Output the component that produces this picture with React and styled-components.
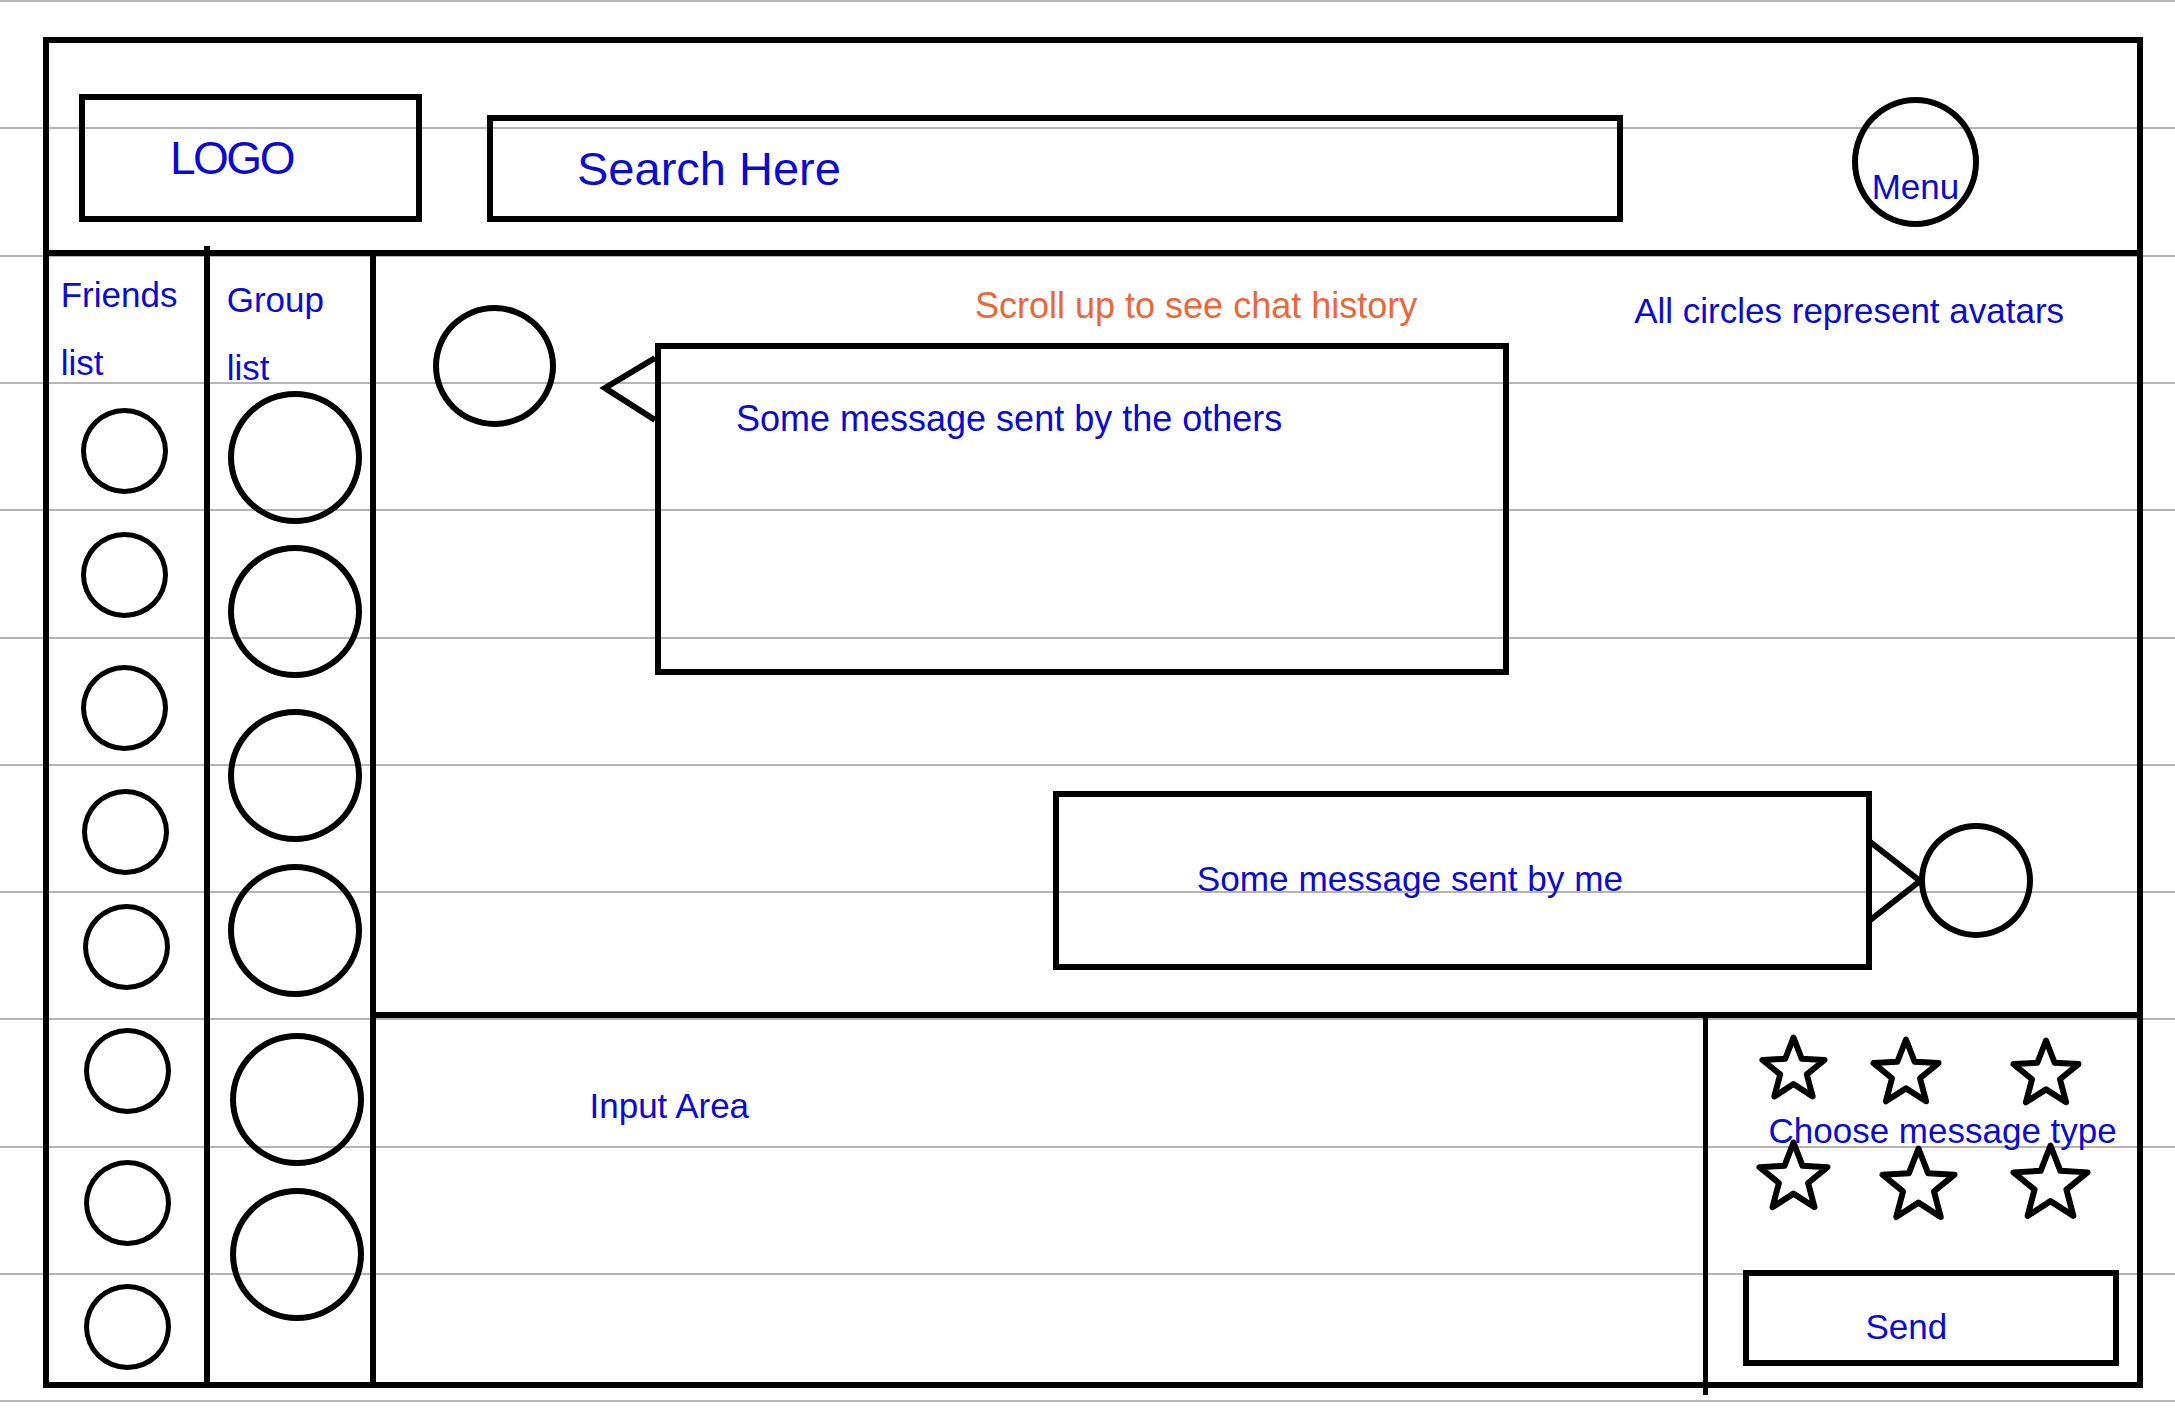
import React from "react";
import styled, { createGlobalStyle } from "styled-components";

const BLUE = "#0b0bcf";
const ORANGE = "#e8683c";
const LINE = 6;

const GlobalStyle = createGlobalStyle`
  html, body {
    margin: 0;
    padding: 0;
  }
  html {
    min-height: 1414px;
    background-color: #fff;
    background-image: repeating-linear-gradient(
      to bottom,
      #b4b4b4 0,
      #b4b4b4 2px,
      transparent 2px,
      transparent 127.3px
    );
  }
  body {
    min-height: 1414px;
    font-family: "Liberation Sans", Arial, sans-serif;
  }
`;

const Page = styled.div`
  padding: 37px 0 0 43px;
`;

const Frame = styled.div`
  box-sizing: border-box;
  width: 2100px;
  height: 1351px;
  border: ${LINE}px solid #000;
  display: flex;
  flex-direction: column;
`;

// Header
const Header = styled.header`
  box-sizing: border-box;
  height: 213px;
  border-bottom: ${LINE}px solid #000;
  display: flex;
  align-items: flex-end;
  padding: 0 0 28px 30px;
  flex-shrink: 0;
`;

const LogoBox = styled.div`
  box-sizing: border-box;
  width: 343px;
  height: 128px;
  border: ${LINE}px solid #000;
  display: flex;
  align-items: center;
  padding-left: 85px;
  color: ${BLUE};
  font-size: 46px;
  letter-spacing: -2.5px;
  line-height: 1;
`;

const SearchBox = styled.div`
  box-sizing: border-box;
  margin-left: 65px;
  width: 1136px;
  height: 107px;
  border: ${LINE}px solid #000;
  display: flex;
  align-items: center;
  padding-left: 84px;
  color: ${BLUE};
  font-size: 47px;
  line-height: 1;
`;

const MenuButton = styled.div`
  box-sizing: border-box;
  margin: 0 0 -4.5px 229px;
  width: 127px;
  height: 130px;
  border: ${LINE}px solid #000;
  border-radius: 50%;
  display: flex;
  justify-content: center;
  padding-top: 66px;
  color: ${BLUE};
  font-size: 35px;
  line-height: 1;
`;

// Body
const Body = styled.div`
  flex: 1;
  display: flex;
  min-height: 0;
`;

const SideColumn = styled.aside`
  box-sizing: border-box;
  width: ${(p) => p.$width}px;
  border-right: ${LINE}px solid #000;
  display: flex;
  flex-direction: column;
  position: relative;
  flex-shrink: 0;

  /* pen stroke that pokes above the header line */
  &::before {
    content: "";
    display: ${(p) => (p.$tick ? "block" : "none")};
    position: absolute;
    top: -10px;
    right: -${LINE}px;
    width: ${LINE}px;
    height: 10px;
    background: #000;
  }
`;

const ListLabel = styled.div`
  color: ${BLUE};
  font-size: 35px;
  line-height: 68px;
  padding: ${(p) => p.$top}px 0 0 ${(p) => p.$left}px;
`;

const AvatarStack = styled.div`
  display: flex;
  flex-direction: column;
  align-items: center;
  margin-top: ${(p) => p.$top}px;
  padding-left: ${(p) => p.$shift || 0}px;
`;

const Avatar = styled.div`
  box-sizing: border-box;
  width: ${(p) => p.$w}px;
  height: ${(p) => p.$h}px;
  border: ${(p) => p.$bw || LINE}px solid #000;
  border-radius: 50%;
  flex-shrink: 0;
  margin-top: ${(p) => p.$mt || 0}px;
  margin-left: ${(p) => p.$ml || 0}px;
`;

// Chat
const Main = styled.main`
  flex: 1;
  display: flex;
  flex-direction: column;
  min-width: 0;
`;

const ChatArea = styled.section`
  flex: 1;
  display: flex;
  flex-direction: column;
  min-height: 0;
`;

const NoticeRow = styled.div`
  display: flex;
  align-items: flex-start;
  padding-top: 32px;
  line-height: 1;
  white-space: nowrap;
`;

const ScrollHint = styled.span`
  margin-left: 599px;
  color: ${ORANGE};
  font-size: 36px;
`;

const AvatarNote = styled.span`
  margin: 4.7px 0 0 217px;
  color: ${BLUE};
  font-size: 35px;
`;

const MessageRow = styled.div`
  display: flex;
  align-items: ${(p) => (p.$mine ? "center" : "flex-start")};
  justify-content: ${(p) => (p.$mine ? "flex-end" : "flex-start")};
  margin-top: ${(p) => p.$top}px;
  padding: ${(p) => (p.$mine ? "0 104px 0 0" : "0 0 0 57px")};
`;

const Bubble = styled.div`
  box-sizing: border-box;
  width: ${(p) => p.$w}px;
  height: ${(p) => p.$h}px;
  margin-top: ${(p) => p.$mt || 0}px;
  margin-left: ${(p) => p.$ml || 0}px;
  border: ${LINE}px solid #000;
  padding: ${(p) => p.$pt}px 0 0 ${(p) => p.$pl}px;
  color: ${BLUE};
  font-size: ${(p) => p.$fs}px;
  line-height: 1;
  white-space: nowrap;
  flex-shrink: 0;
`;

const Tail = styled.svg`
  display: block;
  flex-shrink: 0;
  overflow: visible;
  margin-top: ${(p) => p.$mt || 0}px;
  margin-left: ${(p) => p.$ml || 0}px;
`;

// Composer
const Composer = styled.section`
  box-sizing: border-box;
  height: 370px;
  border-top: ${LINE}px solid #000;
  display: flex;
  flex-shrink: 0;
`;

const InputArea = styled.div`
  flex: 1;
  padding: 70px 0 0 213.5px;
  color: ${BLUE};
  font-size: 35px;
  line-height: 1;
`;

const Controls = styled.div`
  box-sizing: border-box;
  width: 434px;
  border-left: 5px solid #000;
  display: flex;
  flex-direction: column;
  padding-top: 17px;
  position: relative;

  &::after {
    content: "";
    position: absolute;
    left: -5px;
    bottom: -13px;
    width: 5px;
    height: 13px;
    background: #000;
  }
`;

const StarRow = styled.div`
  display: flex;
  align-items: flex-start;
  margin-top: ${(p) => p.$top || 0}px;
`;

const StarSvg = styled.svg`
  display: block;
  flex-shrink: 0;
  overflow: visible;
  margin-left: ${(p) => p.$ml}px;
  margin-top: ${(p) => p.$mt}px;
`;

const TypeLabel = styled.div`
  position: relative;
  z-index: 1;
  margin: 8.5px 0 0 60.5px;
  color: ${BLUE};
  font-size: 35px;
  line-height: 1;
  white-space: nowrap;
`;

const SendButton = styled.div`
  box-sizing: border-box;
  margin: auto 0 16px 35px;
  width: 376px;
  height: 96px;
  border: ${LINE}px solid #000;
  padding: 33px 0 0 116.4px;
  color: ${BLUE};
  font-size: 35px;
  line-height: 1;
`;

function Star({ size, ml, mt }) {
  const R = (size - 5) / 1.902;
  const r = R * 0.43;
  const cx = size / 2;
  const cy = 2.5 + R;
  const h = 5 + R * 1.809;
  const pts = [];
  for (let k = 0; k < 10; k++) {
    const a = ((-90 + 36 * k) * Math.PI) / 180;
    const rad = k % 2 === 0 ? R : r;
    pts.push(`${(cx + rad * Math.cos(a)).toFixed(2)},${(cy + rad * Math.sin(a)).toFixed(2)}`);
  }
  return (
    <StarSvg width={size} height={h} viewBox={`0 0 ${size} ${h}`} $ml={ml} $mt={mt}>
      <polygon
        points={pts.join(" ")}
        fill="none"
        stroke="#000"
        strokeWidth="6"
        strokeLinejoin="round"
      />
    </StarSvg>
  );
}

// hand-drawn circles drift a little, so each one keeps its own offset
const friends = [
  { mt: 0, ml: -5 },
  { mt: 38, ml: -4 },
  { mt: 47, ml: -5 },
  { mt: 38, ml: -3 },
  { mt: 29, ml: 0 },
  { mt: 38, ml: 1.5 },
  { mt: 46, ml: 1.5 },
  { mt: 38, ml: 2 },
];

const groups = [
  { mt: 0, ml: 0 },
  { mt: 21.5, ml: -0.7 },
  { mt: 30.7, ml: 0.7 },
  { mt: 21.9, ml: 0.7 },
  { mt: 36.9, ml: 4 },
  { mt: 22, ml: 3.5 },
];

const starRows = [
  [
    { size: 67, ml: 52, mt: 0 },
    { size: 70, ml: 44, mt: 1.7 },
    { size: 70, ml: 70.3, mt: 3 },
  ],
  [
    { size: 73, ml: 48.5, mt: 0 },
    { size: 77, ml: 50.7, mt: 6 },
    { size: 79, ml: 54, mt: 3 },
  ],
];

export default function App() {
  return (
    <>
      <GlobalStyle />
      <Page>
        <Frame>
          <Header>
            <LogoBox>LOGO</LogoBox>
            <SearchBox>Search Here</SearchBox>
            <MenuButton>Menu</MenuButton>
          </Header>

          <Body>
            <SideColumn $width={161} $tick>
              <ListLabel $top={4.6} $left={11.7}>
                Friends
                <br />
                list
              </ListLabel>
              <AvatarStack $top={11.4}>
                {friends.map((f, i) => (
                  <Avatar key={i} $w={87} $h={86} $bw={5} $mt={f.mt} $ml={f.ml} />
                ))}
              </AvatarStack>
            </SideColumn>

            <SideColumn $width={166}>
              <ListLabel $top={9.9} $left={16.7}>
                Group
                <br />
                list
              </ListLabel>
              <AvatarStack $top={-11.4} $shift={10}>
                {groups.map((g, i) => (
                  <Avatar key={i} $w={134} $h={133} $mt={g.mt} $ml={g.ml} />
                ))}
              </AvatarStack>
            </SideColumn>

            <Main>
              <ChatArea>
                <NoticeRow>
                  <ScrollHint>Scroll up to see chat history</ScrollHint>
                  <AvatarNote>All circles represent avatars</AvatarNote>
                </NoticeRow>

                <MessageRow $top={-22.7}>
                  <Avatar $w={123} $h={122} />
                  <Tail width="57" height="68" $ml={44} $mt={50}>
                    <polyline
                      points="55,3 5,33 55,65"
                      fill="none"
                      stroke="#000"
                      strokeWidth="6"
                    />
                  </Tail>
                  <Bubble $w={854} $h={332} $mt={38} $ml={-2} $pt={52.3} $pl={75} $fs={36}>
                    Some message sent by the others
                  </Bubble>
                </MessageRow>

                <MessageRow $mine $top={116}>
                  <Bubble $w={819} $h={179} $pt={64.3} $pl={137.7} $fs={35.2}>
                    Some message sent by me
                  </Bubble>
                  <Tail width="56" height="86" $ml={-6}>
                    <polyline
                      points="3,3 54,43 3,83"
                      fill="none"
                      stroke="#000"
                      strokeWidth="6"
                    />
                  </Tail>
                  <Avatar $w={114} $h={115} $ml={-3} />
                </MessageRow>
              </ChatArea>

              <Composer>
                <InputArea>Input Area</InputArea>
                <Controls>
                  <StarRow>
                    {starRows[0].map((s, i) => (
                      <Star key={i} {...s} />
                    ))}
                  </StarRow>
                  <TypeLabel>Choose message type</TypeLabel>
                  <StarRow $top={-8.4}>
                    {starRows[1].map((s, i) => (
                      <Star key={i} {...s} />
                    ))}
                  </StarRow>
                  <SendButton>Send</SendButton>
                </Controls>
              </Composer>
            </Main>
          </Body>
        </Frame>
      </Page>
    </>
  );
}
